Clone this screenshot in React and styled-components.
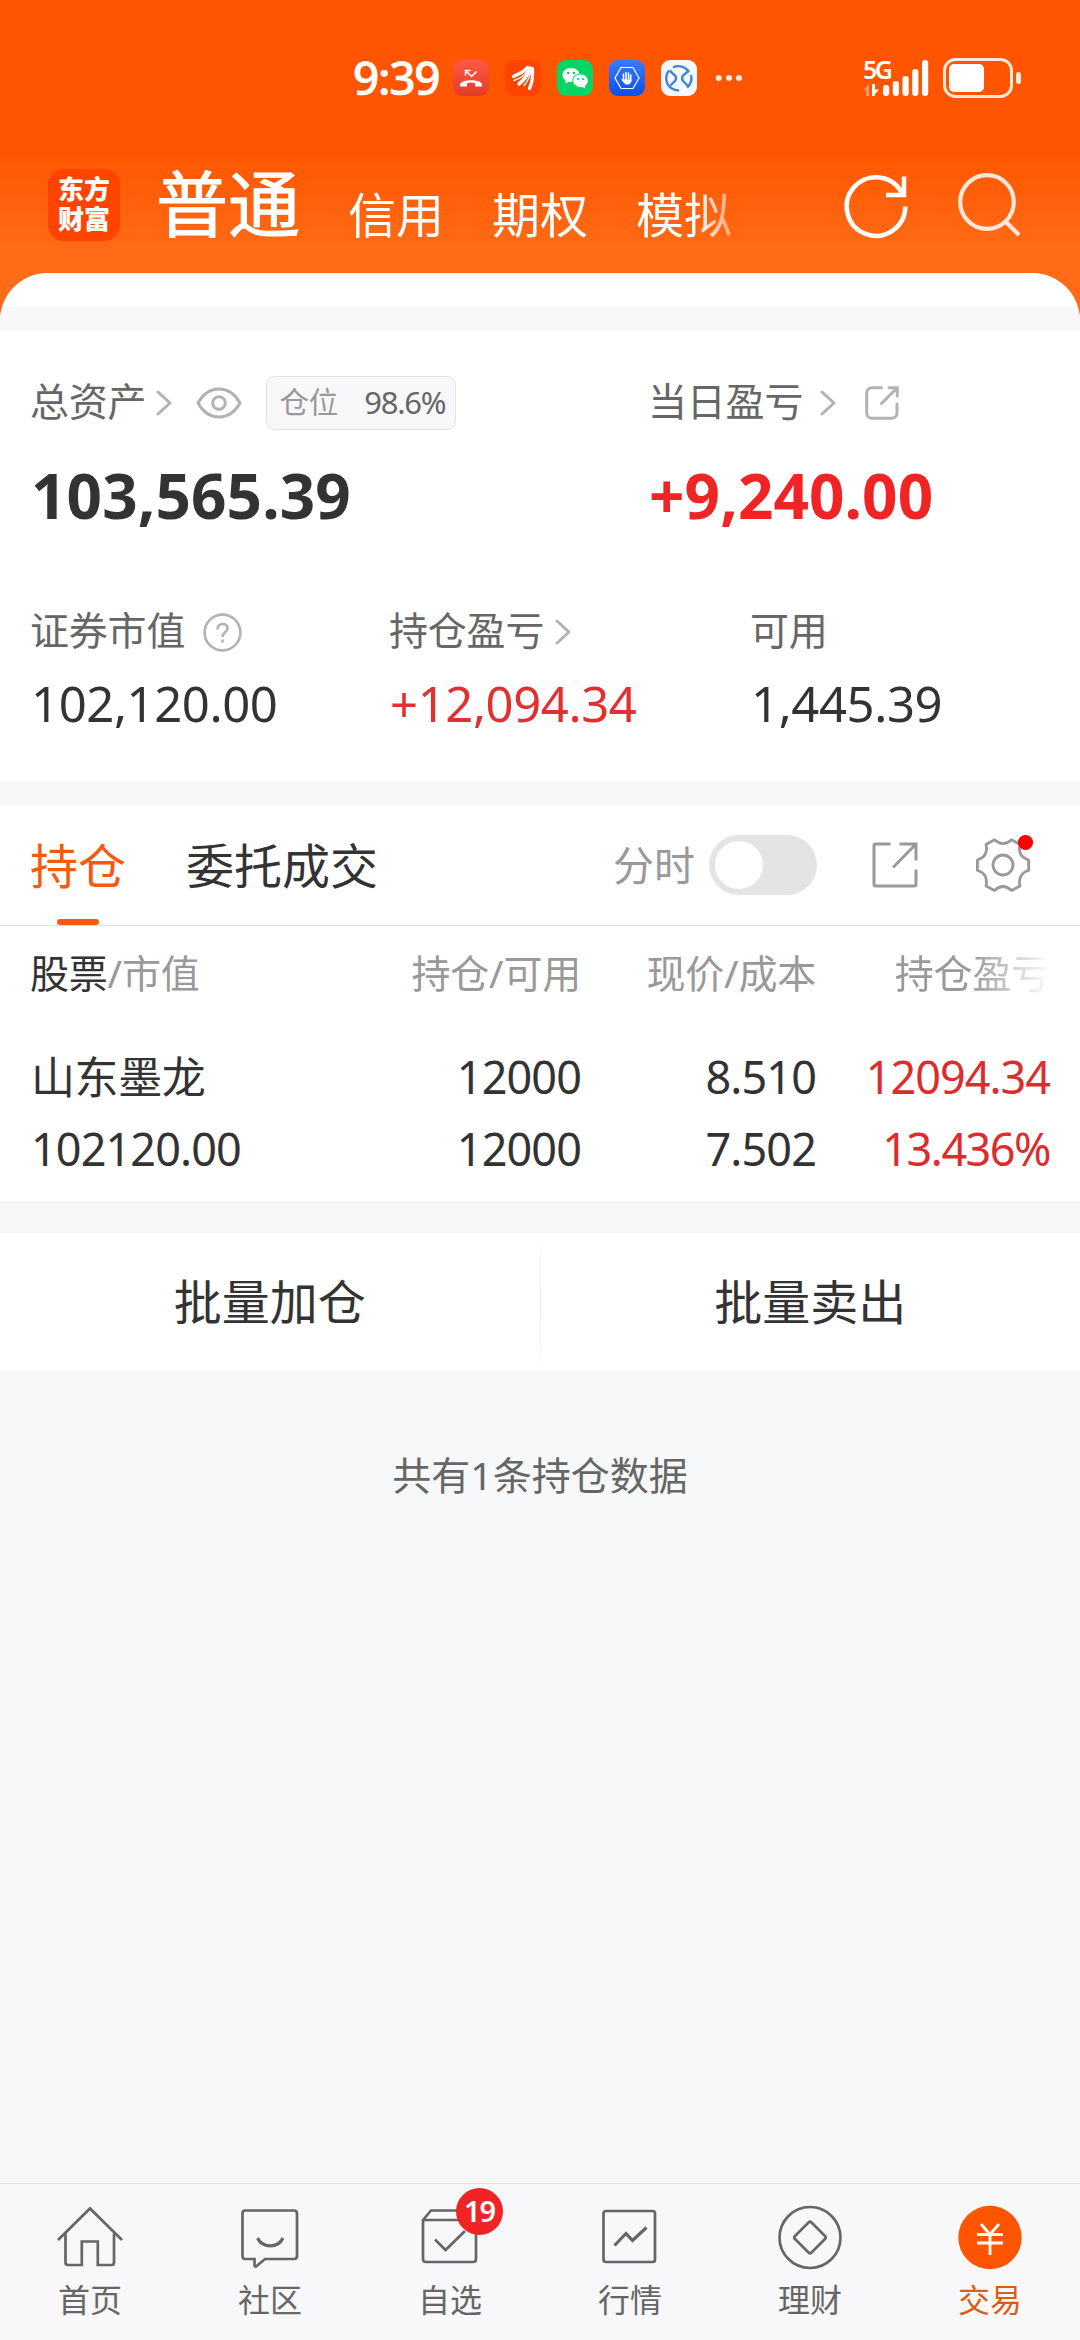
import React, { useState } from 'react';
import styled, { createGlobalStyle } from 'styled-components';

const GlobalStyle = createGlobalStyle`
  * {
    box-sizing: border-box;
  }

  body {
    margin: 0;
    background: #f7f8fa;
    font-family: 'Noto Sans', 'Noto Sans CJK SC', sans-serif;
    color: #333;
  }

  svg {
    display: block;
    flex: none;
    overflow: visible;
  }

  button {
    font: inherit;
    color: inherit;
    background: none;
    border: 0;
    padding: 0;
  }
`;

const Page = styled.div`
  width: 1080px;
  height: 2340px;
  display: flex;
  flex-direction: column;
  overflow: hidden;
  white-space: nowrap;
  background: linear-gradient(#ff5500 0, #ff5500 148px, #ff6c17 255px, #ff6c17 330px, #f7f8fa 330px);
`;

const StatusBar = styled.div`
  height: 156px;
  flex: none;
  display: flex;
  align-items: center;
  padding: 0 59px 0 353px;
  color: #fff;
`;

const Time = styled.div`
  width: 100px;
  font-size: 46px;
  font-weight: 500;
  line-height: 60px;
  letter-spacing: -1.3px;
  margin-top: -2px;
  -webkit-text-stroke: 0.6px #fff;
`;

const AppIcons = styled.div`
  display: flex;
  gap: 16px;
  margin-right: auto;
  align-items: center;
`;

const AppIcon = styled.div`
  width: 36px;
  height: 36px;
  border-radius: 9px;
  background: ${(props) => props.$bg};
`;

const Signal = styled.div`
  display: flex;
  width: 80px;
  height: 36px;
`;

const Network = styled.div`
  width: 20px;
  font-size: 25px;
  font-weight: 600;
  line-height: 18px;
  letter-spacing: -2.5px;
`;

const Header = styled.div`
  height: 117px;
  flex: none;
  display: flex;
  color: #fff;
  padding: 13px 59px 0 48px;
`;

const Logo = styled.div`
  width: 72px;
  height: 72px;
  border-radius: 16px;
  background: #ff4400;
  font-size: 26px;
  font-weight: 900;
  line-height: 30px;
  padding: 5px 8px 0 10px;
  white-space: normal;
`;

const AccountTabs = styled.div`
  display: flex;
  gap: 48px;
  margin-left: 36px;
  width: 575px;
  height: 90px;
  margin-top: -14px;
  -webkit-mask-image: linear-gradient(90deg, #000 540px, transparent 600px);
  mask-image: linear-gradient(90deg, #000 540px, transparent 600px);
`;

const AccountTab = styled.div`
  font-size: ${(props) => (props.$active ? 72 : 48)}px;
  line-height: 96px;
  padding-top: ${(props) => (props.$active ? 0 : 12)}px;
  -webkit-text-stroke: ${(props) => (props.$active ? 1 : 0)}px #fff;
`;

const HeaderIcons = styled.div`
  display: flex;
  gap: 50px;
  margin-left: auto;
  padding-top: 5px;
`;

const Panel = styled.div`
  flex: 1;
  display: flex;
  flex-direction: column;
  border-radius: 48px 48px 0 0;
  overflow: hidden;
  background: #f7f8fa;
`;

const Strip = styled.div`
  height: ${(props) => props.$height}px;
  flex: none;
  background: ${(props) => props.$color || '#f8f8fa'};
`;

const Assets = styled.div`
  height: 450px;
  flex: none;
  background: #fff;
  padding: 42px 31px 0;
`;

const AssetsMain = styled.div`
  display: grid;
  grid-template-columns: 618px 1fr;
  height: 229px;
`;

const AssetsSub = styled.div`
  display: grid;
  grid-template-columns: 359px 361px 1fr;
`;

const Label = styled.div`
  display: flex;
  align-items: center;
  height: 60px;
  font-size: 39px;
  line-height: 60px;
  letter-spacing: -0.2px;
  color: #666;
`;

const LabelText = styled.span`
  margin: -4px 0 0 -1px;
`;

const Total = styled.div`
  font-size: 62px;
  font-weight: 700;
  line-height: 80px;
  margin-top: 22px;
  letter-spacing: 0.1px;
  color: ${(props) => (props.$up ? '#f02424' : '#333')};
`;

const Amount = styled.div`
  font-size: 49px;
  line-height: 60px;
  letter-spacing: -0.4px;
  margin-top: 11px;
  color: ${(props) => (props.$up ? '#e03030' : '#333')};
`;

const Position = styled.div`
  display: flex;
  align-items: center;
  justify-content: space-between;
  width: 190px;
  height: 54px;
  margin-left: 24px;
  padding: 0 10px 2px 12px;
  border: 1px solid #e2e3e5;
  border-radius: 9px;
  background: #f8f8fa;
  font-size: 29.5px;
  color: #999;

  b {
    font-size: 31px;
    font-weight: 400;
    letter-spacing: -1.2px;
    color: #666;
  }
`;

const Gap = styled.span`
  width: ${(props) => props.$w}px;
  flex: none;
`;

const TabBar = styled.div`
  height: 121px;
  flex: none;
  display: flex;
  align-items: center;
  background: #fff;
  border-bottom: 1px solid #dedede;
  padding: 0 50px 0 30px;
`;

const Tab = styled.button`
  position: relative;
  height: 120px;
  margin-right: 60px;
  font-size: 48px;
  line-height: 119px;
  color: ${(props) => (props.$active ? '#f55a0e' : '#333')};

  &::after {
    content: '';
    display: ${(props) => (props.$active ? 'block' : 'none')};
    position: absolute;
    left: 27px;
    bottom: 0;
    width: 42px;
    height: 6px;
    border-radius: 3px;
    background: #f55a0e;
  }
`;

const Tools = styled.div`
  display: flex;
  align-items: center;
  margin-left: auto;
  font-size: 41px;
  color: #999;
`;

const ToggleText = styled.span`
  margin-top: -4px;
`;

const Toggle = styled.button`
  width: 108px;
  height: 60px;
  margin: 0 55px 0 14px;
  padding: 6px;
  border-radius: 30px;
  background: ${(props) => (props.$on ? '#f55a0e' : '#e4e4e6')};

  &::after {
    content: '';
    display: block;
    width: 48px;
    height: 48px;
    border-radius: 50%;
    background: #fff;
    margin-left: ${(props) => (props.$on ? 48 : 0)}px;
  }
`;

const Table = styled.div`
  height: 277px;
  flex: none;
  background: #fff;
  border-bottom: 1px solid #ebecee;
  padding: 17px 30px 0 31px;
`;

const Row = styled.div`
  display: grid;
  grid-template-columns: 280px 270px 235px 234px;
  height: 72px;
  align-items: center;
  font-size: 45px;
  line-height: 72px;
  letter-spacing: -0.9px;
  text-align: right;

  & > :first-child {
    text-align: left;
  }
`;

const HeadRow = styled(Row)`
  height: 60px;
  margin: 0 0 38px -1px;
  grid-template-columns: 281px 270px 235px 234px;
  font-size: 39px;
  line-height: 60px;
  letter-spacing: -0.2px;
  color: #999;

  b {
    font-weight: 400;
    color: #333;
  }
`;

const Fading = styled.div`
  -webkit-mask-image: linear-gradient(90deg, #000 155px, transparent 235px);
  mask-image: linear-gradient(90deg, #000 155px, transparent 235px);
`;

const Stock = styled.div`
  font-size: 44px;
  letter-spacing: -0.4px;
`;

const Up = styled.div`
  color: #dc2d2d;
  letter-spacing: ${(props) => (props.$tight ? -1.5 : -1)}px;
`;

const Actions = styled.div`
  height: 138px;
  flex: none;
  display: flex;
  align-items: center;
  background: #fff;
`;

const Action = styled.button`
  flex: 1;
  font-size: 48px;
  line-height: 138px;
`;

const Divider = styled.div`
  width: 1px;
  height: 138px;
  background: linear-gradient(#fff, #e8e8ea 50%, #fff);
`;

const Summary = styled.div`
  margin-top: 74px;
  text-align: center;
  font-size: 39px;
  line-height: 60px;
  color: #666;
`;

const Nav = styled.div`
  height: 157px;
  flex: none;
  margin-top: auto;
  display: grid;
  grid-template-columns: repeat(6, 1fr);
  border-top: 1px solid #e2e2e4;
  background: #f8f8fa;
`;

const NavItem = styled.div`
  position: relative;
  display: flex;
  flex-direction: column;
  align-items: center;
  padding-top: 20px;
  font-size: 32px;
  line-height: 40px;
  color: ${(props) => (props.$active ? '#d85e18' : '#666')};

  svg {
    margin-bottom: 10px;
  }
`;

const Badge = styled.div`
  position: absolute;
  left: 96px;
  top: 4px;
  width: 47px;
  height: 47px;
  border-radius: 50%;
  background: #f02424;
  color: #fff;
  font-size: 29px;
  font-weight: 600;
  line-height: 46px;
  letter-spacing: -1px;
  text-align: center;
`;

const Chevron = () => (
  <svg width="16" height="26" viewBox="0 0 16 26" fill="none" stroke="#b2b2b2" strokeWidth="3" strokeLinecap="round" strokeLinejoin="round">
    <path d="M2 2l12 11L2 24" />
  </svg>
);

const Eye = () => (
  <svg width="46" height="32" viewBox="0 0 46 32" fill="none" stroke="#b2b2b2" strokeWidth="3">
    <path d="M2 16C7 7 14 2 23 2s16 5 21 14c-5 9-12 14-21 14S7 25 2 16z" strokeLinejoin="round" />
    <circle cx="23" cy="16" r="6.3" />
  </svg>
);

const ShareRound = () => (
  <svg width="34" height="34" viewBox="0 0 34 34" fill="none" stroke="#b2b2b2" strokeWidth="3" strokeLinecap="round">
    <path d="M16.5 1.7H7a5.3 5.3 0 0 0-5.3 5.3v20A5.3 5.3 0 0 0 7 32.3h19.7a5.3 5.3 0 0 0 5.3-5.3V18" />
    <path d="M24 1.7h8.3V10M32 2L16.5 17.5" />
  </svg>
);

const Share = () => (
  <svg width="46" height="46" viewBox="0 0 46 46" fill="none" stroke="#999" strokeWidth="3">
    <path d="M18.5 2H3.5Q2 2 2 3.5V42.5Q2 44 3.5 44H42.5Q44 44 44 42.5V27.5" />
    <path d="M27.5 2H44V18.5M43 3L21 25.5" />
  </svg>
);

const Question = () => (
  <svg width="39" height="39" viewBox="0 0 39 39" fill="none" stroke="#b2b2b2" strokeWidth="2.6">
    <circle cx="19.5" cy="19.5" r="17.9" />
    <path d="M14.5 16.5c0-3.500 2-5.500 5-5.500s5 1.800 5 4.600c0 3.600-5 3.900-5 8.400" />
    <path d="M19.5 26.5v3" />
  </svg>
);

const Gear = () => (
  <svg width="54" height="54" viewBox="0 0 54 54" fill="none" stroke="#999" strokeWidth="2.8" strokeLinejoin="round">
    <path d="M18.5 1.8Q27 9.500 35.500 1.800L44 6.500C42 15 46 20 52.600 22V32.500C46 34 42 40 44 48L35.500 52.500Q27 44.500 18.500 52.500L10 48C12 40 8 34 1.400 32.500V22C8 20 12 15 10 6.500z" />
    <circle cx="27" cy="27" r="10" />
    <circle cx="49.5" cy="4.5" r="7.6" fill="#ff0000" stroke="none" />
  </svg>
);

const Refresh = () => (
  <svg width="63" height="63" viewBox="0 0 63 63" fill="none" stroke="#fff" strokeWidth="4.5">
    <path d="M60.300 32.500A29.300 29.300 0 1 1 57 19" />
    <path d="M59 2.500V21H41" />
  </svg>
);

const Search = () => (
  <svg width="63" height="63" viewBox="0 0 63 63" fill="none" stroke="#ffe6d8" strokeWidth="4.2">
    <circle cx="29" cy="28" r="26.8" />
    <path d="M47.500 47.500L61 61" />
  </svg>
);

const statusIcons = [
  {
    bg: 'linear-gradient(#ff5a45, #e23c28)',
    art: (
      <>
        <path d="M7 26.500v-2.300C9 18.800 27 18.800 29 24.200v2.300h-7v-3.300q-4-1.200-8 0v3.300z" fill="#fff" />
        <path d="M12.500 15.500v-5h5M13 11l5.500 5.500 5-5" fill="none" stroke="#fff" strokeWidth="1.5" />
      </>
    ),
  },
  {
    bg: '#ff4400',
    art: (
      <g fill="none" stroke="#fff" strokeLinecap="round">
        <path d="M8.500 16.500C13 14 19 12 22.500 7.500" strokeWidth="3.4" />
        <path d="M14 24C19 20 23 15 25 8" strokeWidth="3.6" />
        <path d="M24.500 28.500C27.500 22 28 15 27.500 8.500" strokeWidth="3.2" />
        <path d="M9 20.500C14 19 20 15 23.500 9M19 25.500C23 21 25.500 15 26 9" strokeWidth="1.4" />
      </g>
    ),
  },
  {
    bg: '#07d563',
    art: (
      <>
        <path d="M14 8C9 8 5.500 11 5.500 15c0 2.300 1.200 4.200 3.200 5.500L8 23.500l3.400-1.800c4.600 1.200 11.200-1 11.200-6.700C22.600 11 19 8 14 8z" fill="#fff" />
        <ellipse cx="23.5" cy="20.7" rx="7.8" ry="6.8" fill="#fff" stroke="#07d563" />
        <path d="M24 26.500l4.500 2-.8-3.500z" fill="#fff" />
        <g fill="#07c05c">
          <circle cx="11.3" cy="13" r="1.2" />
          <circle cx="17" cy="13" r="1.2" />
          <circle cx="21" cy="19" r="1" />
          <circle cx="26" cy="19" r="1" />
        </g>
      </>
    ),
  },
  {
    bg: 'linear-gradient(#3a7bff, #0a50e8)',
    art: (
      <>
        <path d="M12 7.500h12l6 10.500-6 10.500H12L6 18z" fill="none" stroke="#fff" strokeWidth="1.2" />
        <path d="M14.500 14v6M17 12.500v8M19.500 13v8M21.700 15v6" stroke="#fff" strokeWidth="1.6" strokeLinecap="round" />
        <path d="M12 19l2 .5h8.500v1q-.8 4-3.800 4h-2.200q-2.500-2-4.500-5.500z" fill="#fff" />
      </>
    ),
  },
  {
    bg: '#f7f8fc',
    art: (
      <g fill="none" stroke="#3f86da" strokeWidth="2.4">
        <path d="M12 7.500a12.300 12.300 0 0 1 16 4.500M30 15a12.300 12.300 0 0 1-4 12.500M8 10.500a12.300 12.300 0 0 0 2 17.500q4 2.500 8 2.500" />
        <path d="M8.500 10.500L14 15.500Q16.500 19 13 22L9.500 25.500M27.500 11L22.500 15Q19.500 18.500 22.500 21.500L27 26" />
      </g>
    ),
  },
];

const navItems = [
  {
    name: '首页',
    art: (
      <>
        <path d="M1 36L33 4.500 65 36" />
        <path d="M8.500 29.500V58.500Q8.500 61 11 61H24.800V37.500H40.800V61H54.500Q57 61 57 58.500V29.500" />
      </>
    ),
  },
  {
    name: '社区',
    art: (
      <>
        <path d="M8 6.500H57Q60 6.500 60 9.500V52Q60 55 57 55H28L19 62.500Q17.500 63 17.500 61V55H8Q5.500 55 5.500 52V9.500Q5.500 6.500 8 6.500z" />
        <path d="M20.500 34c5 10.500 20.500 10.500 25.500 0" strokeWidth="3.2" />
      </>
    ),
  },
  {
    name: '自选',
    badge: 19,
    art: (
      <>
        <path d="M6 16L14 6.500H51L59 16V55Q59 58 56 58H9Q6 58 6 55zM6 16H59" />
        <path d="M18 35.500L28.500 46 48 27" />
      </>
    ),
  },
  {
    name: '行情',
    art: (
      <>
        <rect x="6.5" y="7" width="51.5" height="51" rx="2.5" />
        <path d="M17.500 41.500L29 29.500 35.500 36.500 49.500 23.500" strokeWidth="3.2" />
      </>
    ),
  },
  {
    name: '理财',
    art: (
      <>
        <circle cx="33" cy="33.5" r="30.5" />
        <path d="M31.500 18.500Q33 17 34.500 18.500L48 32Q49.500 33.500 48 35L34.500 48.500Q33 50 31.500 48.500L18 35Q16.500 33.500 18 32z" />
      </>
    ),
  },
  {
    name: '交易',
    active: true,
    art: (
      <>
        <circle cx="33" cy="33.5" r="31.7" fill="#ff5500" stroke="none" />
        <path d="M24 20L33 30.500 42 20M33 30V51M20 30.500H46M20 39H46" stroke="#fff" strokeWidth="2.8" />
      </>
    ),
  },
];

const Status = () => (
  <StatusBar>
    <Time>9:39</Time>
    <AppIcons>
      {statusIcons.map((icon, i) => (
        <AppIcon key={i} $bg={icon.bg}>
          <svg width="36" height="36" viewBox="0 0 36 36">
            {icon.art}
          </svg>
        </AppIcon>
      ))}
      <svg width="30" height="36" viewBox="0 0 30 36" fill="#ffe9dd">
        <circle cx="5.7" cy="18" r="3" />
        <circle cx="16" cy="18" r="3" />
        <circle cx="26" cy="18" r="3" />
      </svg>
    </AppIcons>
    <Signal>
      <Network>5G</Network>
      <svg width="46" height="36" viewBox="0 0 46 36" fill="#fff">
        <path d="M-20 30.500l6-6.500v12h-3v-5.500z" opacity=".4" />
        <path d="M-11 24h3v5.500h4L-8 34v2h-3z" />
        <rect x="0" y="25" width="6.2" height="11" rx="3" />
        <rect x="9.8" y="21" width="6.2" height="15" rx="3" />
        <rect x="19.5" y="16" width="6.2" height="20" rx="3" />
        <rect x="29.2" y="9" width="6.2" height="27" rx="3" />
        <rect x="39" y="0" width="6.2" height="36" rx="3" />
      </svg>
    </Signal>
    <svg width="78" height="40" viewBox="0 0 78 40">
      <rect x="1.5" y="1.5" width="67" height="37" rx="11" fill="none" stroke="#ffe9d8" strokeWidth="3" />
      <rect x="6" y="6" width="35" height="28" rx="5" fill="#fff" />
      <rect x="73" y="14" width="5" height="12" rx="2.5" fill="#ffe9d8" />
    </svg>
  </StatusBar>
);

const App = () => {
  const [tab, setTab] = useState('持仓');
  const [minute, setMinute] = useState(false);

  return (
    <>
      <GlobalStyle />
      <Page>
        <Status />
        <Header>
          <Logo>东方财富</Logo>
          <AccountTabs>
            <AccountTab $active>普通</AccountTab>
            <AccountTab>信用</AccountTab>
            <AccountTab>期权</AccountTab>
            <AccountTab>模拟</AccountTab>
          </AccountTabs>
          <HeaderIcons>
            <Refresh />
            <Search />
          </HeaderIcons>
        </Header>

        <Panel>
          <Strip $height={34} $color="#fff" />
          <Strip $height={24} />
          <Assets>
            <AssetsMain>
              <div>
                <Label>
                  <LabelText>总资产</LabelText>
                  <Gap $w={10} />
                  <Chevron />
                  <Gap $w={24} />
                  <Eye />
                  <Position>
                    仓位<b>98.6%</b>
                  </Position>
                </Label>
                <Total>103,565.39</Total>
              </div>
              <div>
                <Label>
                  <LabelText>当日盈亏</LabelText>
                  <Gap $w={17} />
                  <Chevron />
                  <Gap $w={29} />
                  <ShareRound />
                </Label>
                <Total $up>+9,240.00</Total>
              </div>
            </AssetsMain>
            <AssetsSub>
              <div>
                <Label>
                  <LabelText>证券市值</LabelText>
                  <Gap $w={18} />
                  <Question />
                </Label>
                <Amount>102,120.00</Amount>
              </div>
              <div>
                <Label>
                  <LabelText>持仓盈亏</LabelText>
                  <Gap $w={11} />
                  <Chevron />
                </Label>
                <Amount $up>+12,094.34</Amount>
              </div>
              <div>
                <Label>
                  <LabelText>可用</LabelText>
                </Label>
                <Amount>1,445.39</Amount>
              </div>
            </AssetsSub>
          </Assets>
          <Strip $height={24} />

          <TabBar>
            {['持仓', '委托成交'].map((name) => (
              <Tab key={name} $active={tab === name} onClick={() => setTab(name)}>
                {name}
              </Tab>
            ))}
            <Tools>
              <ToggleText>分时</ToggleText>
              <Toggle $on={minute} onClick={() => setMinute(!minute)} />
              <Share />
              <Gap $w={58} />
              <Gear />
            </Tools>
          </TabBar>

          <Table>
            <HeadRow>
              <div>
                <b>股票</b>/市值
              </div>
              <div>持仓/可用</div>
              <div>现价/成本</div>
              <Fading>持仓盈亏</Fading>
            </HeadRow>
            <Row>
              <Stock>山东墨龙</Stock>
              <div>12000</div>
              <div>8.510</div>
              <Up>12094.34</Up>
            </Row>
            <Row>
              <div>102120.00</div>
              <div>12000</div>
              <div>7.502</div>
              <Up $tight>13.436%</Up>
            </Row>
          </Table>
          <Strip $height={30} $color="#f7f8fa" />

          <Actions>
            <Action>批量加仓</Action>
            <Divider />
            <Action>批量卖出</Action>
          </Actions>
          <Summary>共有1条持仓数据</Summary>

          <Nav>
            {navItems.map((item) => (
              <NavItem key={item.name} $active={item.active}>
                <svg width="66" height="66" viewBox="0 0 66 66" fill="none" stroke="#666" strokeWidth="2.7">
                  {item.art}
                </svg>
                {item.name}
                {item.badge && <Badge>{item.badge}</Badge>}
              </NavItem>
            ))}
          </Nav>
        </Panel>
      </Page>
    </>
  );
};

export default App;
